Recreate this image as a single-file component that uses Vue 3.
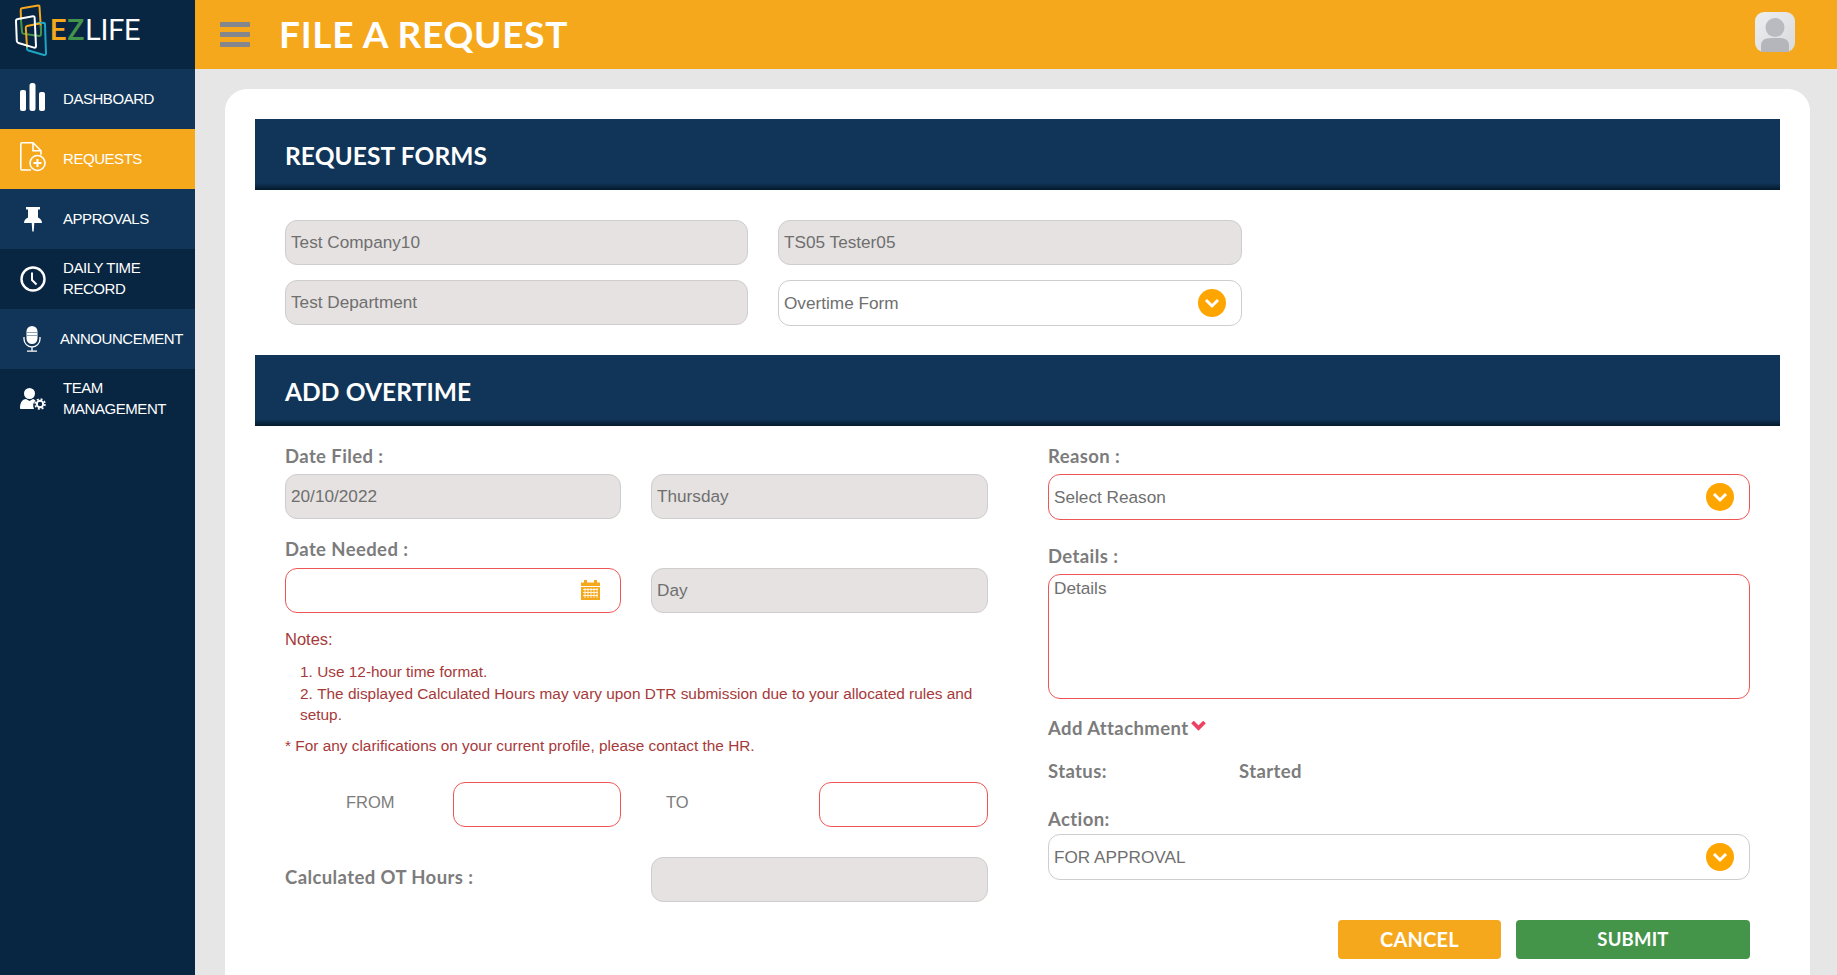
<script setup>
const menu = [
  { id: 'dash', lines: ['DASHBOARD'], tone: 'light' },
  { id: 'req', lines: ['REQUESTS'], tone: 'active' },
  { id: 'pin', lines: ['APPROVALS'], tone: 'light' },
  { id: 'clock', lines: ['DAILY TIME', 'RECORD'], tone: 'dark' },
  { id: 'mic', lines: ['ANNOUNCEMENT'], tone: 'light', tight: true },
  { id: 'team', lines: ['TEAM', 'MANAGEMENT'], tone: 'dark' }
]
</script>

<template>
  <div class="app">
    <aside class="sidebar">
      <div class="logo">
        <svg class="logo-mark" width="50" height="60" viewBox="0 0 50 60" fill="none" stroke-width="2" stroke-linecap="round">
          <path d="M11 20L10.700 10Q10.700 8.500 12 8.300L28 5.500Q29.500 5.300 29.500 7L31 30" stroke="#f6a81c" />
          <path d="M11 20L12 32Q12 33.500 13.500 33.700L29 36Q31 36 31 34L31 26" stroke="#43944a" />
          <path d="M17 46L17 49Q17 50 18.500 50.500L34 55Q36.200 55.300 36 53L35 24.500Q35 22.800 33.500 22.800L27 23.200" stroke="#1ba7c4" />
          <path d="M17 46.500L15.800 28Q15.700 26.300 17 26L29.500 23.500" stroke="#f6a81c" />
          <path d="M8 19L23 16.200Q24.500 16 24.600 17.500L26 46Q26 48 24 47.600L8.500 43Q7 42.600 6.800 41L6 21Q6 19.300 8 19Z" stroke="#fff" />
        </svg>
        <span class="logo-text"><span class="ez-e">E</span><span class="ez-z">Z</span>LIFE</span>
      </div>
      <nav>
        <a v-for="m in menu" :key="m.id" class="item" :class="[m.tone, m.id, { tight: m.tight }]">
          <span class="ico">
            <svg v-if="m.id === 'dash'" width="26" height="28" viewBox="0 0 26 28" fill="#fff">
              <rect x="0" y="7" width="6" height="21" rx="2" /><rect x="9.500" y="0" width="6" height="28" rx="2.500" /><rect x="19" y="9" width="6" height="19" rx="2" />
            </svg>
            <svg v-else-if="m.id === 'req'" width="26" height="30" viewBox="0 0 26 30" fill="none" stroke="#fff" stroke-width="1.600">
              <path d="M11 28H2a1.200 1.200 0 0 1-1.200-1.200V2A1.200 1.200 0 0 1 2 .8h11l8 8v4" /><path d="M13 .8v8h8" />
              <circle cx="17.500" cy="21" r="7.500" /><path d="M17.500 17v8M13.500 21h8" stroke-width="2" />
            </svg>
            <svg v-else-if="m.id === 'pin'" width="20" height="25" viewBox="0 0 20 25" fill="#fff">
              <path d="M3 0h14v2.500h-2v8c2.500 1 4 3 4 5.500H11.300l-.6 8.500h-1.400L8.700 16H1c0-2.500 1.500-4.500 4-5.500v-8H3z" />
            </svg>
            <svg v-else-if="m.id === 'clock'" width="26" height="26" viewBox="0 0 26 26" fill="none" stroke="#fff">
              <circle cx="13" cy="13" r="11.500" stroke-width="2.400" /><path d="M12 6.500V14l4.500 4.500" stroke-width="2" />
            </svg>
            <svg v-else-if="m.id === 'mic'" width="18" height="26" viewBox="0 0 18 26" fill="none">
              <rect x="3.500" y="0" width="11" height="18" rx="5.500" fill="#fff" /><path d="M3.500 6.500h11M3.500 9.500h11" stroke="#8da3b8" stroke-width="1.200" />
              <path d="M1 11v2a8 8 0 0 0 16 0v-2M9 21v4M4 25.200h10" stroke="#fff" stroke-width="1.300" />
            </svg>
            <svg v-else width="26" height="22" viewBox="0 0 26 22" fill="#fff">
              <circle cx="9.500" cy="5.500" r="5.500" /><path d="M0 20c0-6 3-9 6-9l3.500 2 3.500-2c1 .3 2 1 2.500 1.800-2.500 2-3 4.500-1.500 8.200H1c-.6 0-1-.4-1-1z" />
              <circle cx="20" cy="16" r="3.200" fill="none" stroke="#fff" stroke-width="2" />
              <circle cx="20" cy="16" r="5" fill="none" stroke="#fff" stroke-width="1.500" stroke-dasharray="2 1.930" />
            </svg>
          </span>
          <span class="label"><span v-for="l in m.lines" :key="l">{{ l }}</span></span>
        </a>
      </nav>
    </aside>

    <div class="main">
      <header class="top">
        <div class="burger"><i></i><i></i><i></i></div>
        <h1>FILE A REQUEST</h1>
        <div class="avatar">
          <svg width="40" height="40" viewBox="0 0 40 40">
            <defs>
              <linearGradient id="g" x1="0" y1="0" x2="1" y2="1"><stop offset="0" stop-color="#eceeef" /><stop offset="1" stop-color="#d8dadd" /></linearGradient>
            </defs>
            <rect width="40" height="40" rx="9" fill="url(#g)" />
            <circle cx="20" cy="15.500" r="9.500" fill="#b9bbc0" />
            <path d="M6 40v-6c0-8 6-8 14-8s14 0 14 8v6z" fill="#b4b6bb" />
          </svg>
        </div>
      </header>

      <main class="content">
        <section class="card">
          <div class="band">REQUEST FORMS</div>
          <div class="top-form">
            <div class="field ro">Test Company10</div>
            <div class="field ro">TS05 Tester05</div>
            <div class="field ro">Test Department</div>
            <div class="field sel">Overtime Form
              <svg class="chev" width="28" height="28" viewBox="0 0 28 28"><circle cx="14" cy="14" r="14" fill="#ffa500" /><path d="M8 11l6 6 6-6" fill="none" stroke="#fff" stroke-width="3" /></svg>
            </div>
          </div>

          <div class="band">ADD OVERTIME</div>
          <div class="columns">
            <div class="col">
              <div class="lab first">Date Filed :</div>
              <div class="pair">
                <div class="field ro">20/10/2022</div>
                <div class="field ro">Thursday</div>
              </div>
              <div class="lab second">Date Needed :</div>
              <div class="pair">
                <div class="field err cal">
                  <svg width="19" height="20" viewBox="0 0 19 20">
                    <path d="M0 2.500h3V0h3v2.500h7V0h3v2.500h3V6H0z" fill="#f6a81c" />
                    <path d="M0 7h19v13H0z" fill="#f6a81c" />
                    <path d="M2 9.500h15M2 12.500h15M2 15.500h15M4 8v10M7 8v10M10 8v10M13 8v10M16 8v10" stroke="#fff" stroke-width=".8" fill="none" />
                  </svg>
                </div>
                <div class="field ro">Day</div>
              </div>
              <div class="notes">
                <div class="notes-title">Notes:</div>
                <ol>
                  <li>Use 12-hour time format.</li>
                  <li>The displayed Calculated Hours may vary upon DTR submission due to your allocated rules and setup.</li>
                </ol>
                <div class="star">* For any clarifications on your current profile, please contact the HR.</div>
              </div>
              <div class="pair time">
                <div class="range"><span class="from">FROM</span><div class="field err"></div></div>
                <div class="range"><span class="to">TO</span><div class="field err"></div></div>
              </div>
              <div class="pair calc">
                <div class="lab">Calculated OT Hours :</div>
                <div class="field ro"></div>
              </div>
            </div>

            <div class="col">
              <div class="lab first">Reason :</div>
              <div class="field err sel">Select Reason
                <svg class="chev" width="28" height="28" viewBox="0 0 28 28"><circle cx="14" cy="14" r="14" fill="#ffa500" /><path d="M8 11l6 6 6-6" fill="none" stroke="#fff" stroke-width="3" /></svg>
              </div>
              <div class="lab details">Details :</div>
              <div class="field err area">Details</div>
              <div class="lab attach">Add Attachment
                <svg width="17" height="12" viewBox="0 0 17 12"><path d="M2.500 2l6 6 6-6" fill="none" stroke="#ee4060" stroke-width="3.800" /></svg>
              </div>
              <div class="lab status"><span>Status:</span><span>Started</span></div>
              <div class="lab action">Action:</div>
              <div class="field sel">FOR APPROVAL
                <svg class="chev" width="28" height="28" viewBox="0 0 28 28"><circle cx="14" cy="14" r="14" fill="#ffa500" /><path d="M8 11l6 6 6-6" fill="none" stroke="#fff" stroke-width="3" /></svg>
              </div>
              <div class="buttons">
                <button class="btn cancel">CANCEL</button>
                <button class="btn submit">SUBMIT</button>
              </div>
            </div>
          </div>
        </section>
      </main>
    </div>
  </div>
</template>

<style>
html, body { margin: 0; height: 100%; overflow: hidden; }
</style>

<style scoped>
.app { display: flex; height: 975px; overflow: hidden; font-family: "Liberation Sans", Arial, sans-serif; }
.sidebar { width: 195px; flex: none; background: #082542; }
.logo { height: 69px; display: flex; align-items: flex-start; padding-left: 10px; box-sizing: border-box; }
.logo-mark { flex: none; }
.logo-text { font: 400 29px/1 Roboto, sans-serif; color: #fff; margin: 16px 0 0 -10px; letter-spacing: -.3px; }
.ez-z { color: #43944a; margin-right: 1px; font-weight: 500; }
.ez-e { color: #f6a81c; margin-right: 1px; font-weight: 500; }
.item { height: 60px; display: flex; align-items: center; color: #fff; font: 400 15px/21px "Liberation Sans", Arial, sans-serif; letter-spacing: -.45px; }
.item.light { background: #103558; }
.item.dark { background: #082542; }
.item.active { background: #f6a81c; }
.ico { width: 63px; padding-left: 20px; box-sizing: border-box; flex: none; display: flex; }
.dash .ico, .req .ico { padding-bottom: 4px; }
.pin .ico { padding-left: 23px; }
.item.tight .ico { width: 60px; padding-left: 23px; }
.label { display: flex; flex-direction: column; padding-bottom: 2px; }
.label span { white-space: nowrap; }

.main { flex: 1; min-width: 0; display: flex; flex-direction: column; background: #e6e6e6; }
.top { height: 69px; flex: none; background: #f6a81c; display: flex; align-items: center; position: relative; }
.burger { width: 30px; margin-left: 25px; display: flex; flex-direction: column; gap: 5px; }
.burger i { height: 5px; border-radius: 1px; background: #83868c; }
.top h1 { margin: -3px 0 0 29px; font: 700 37px/1 Lato, sans-serif; color: #fff; letter-spacing: .7px; }
.avatar { position: absolute; left: 1560px; top: 12px; display: flex; }

.content { flex: 1; min-height: 0; padding: 20px 27px 0 30px; overflow: hidden; }
.card { background: #fff; border-radius: 22px 22px 0 0; padding: 30px 30px 40px; height: 886px; box-sizing: border-box; }
.band { height: 71px; background: linear-gradient(to bottom, #103558 0, #103558 64px, #04182a 71px); color: #fff; font: 700 24.500px/73px Lato, sans-serif; padding-left: 30px; letter-spacing: .1px; }
.top-form { display: grid; grid-template-columns: 463px 464px; column-gap: 30px; row-gap: 15px; padding: 30px 30px 29px; }

.field { height: 45px; box-sizing: border-box; border-radius: 12px; border: 1px solid #cfcdcd; background: #fff; color: #6f6f6f; font-size: 17.200px; line-height: 43px; padding-left: 5px; position: relative; }
.field.ro { background: #e5e2e1; }
.field.err { border-color: #ee5555; }
.sel { height: 46px; line-height: 45px; }
.chev { position: absolute; right: 15px; top: 8px; }
.cal svg { position: absolute; right: 20px; top: 11px; }

.columns { display: grid; grid-template-columns: 703px 702px; column-gap: 60px; padding: 0 30px; }
.lab { font: 700 18.500px/22px Lato, sans-serif; color: #7c7c7c; letter-spacing: .4px; }
.lab.first { padding-top: 19px; margin-bottom: 7px; }
.lab.second { margin-top: 19px; margin-bottom: 8px; }
.pair { display: grid; grid-template-columns: 336px 337px; column-gap: 30px; }

.notes { color: #a63a3a; font-size: 15.400px; margin-top: 16px; }
.notes-title { font-size: 16.500px; line-height: 20px; }
.notes ol { margin: 12px 0 0; padding: 0 0 0 15px; line-height: 21.500px; list-style-position: inside; }
.star { line-height: 20px; margin-top: 10px; }
.time { margin-top: 26px; }
.range { display: grid; align-items: center; }
.range:first-child { grid-template-columns: 168px 168px; }
.range:last-child { grid-template-columns: 168px 169px; }
.range span { font-size: 16.500px; color: #7c7c7c; padding-bottom: 3px; }
.from { padding-left: 61px; }
.to { padding-left: 15px; }
.calc { margin-top: 30px; align-items: center; }
.calc .lab { padding-bottom: 5px; }

.details { margin-top: 25px; margin-bottom: 7px; }
.area { height: 125px; line-height: 20px; padding-top: 3px; }
.attach { margin-top: 18px; display: flex; align-items: flex-start; gap: 2px; }
.attach svg { margin-top: 3px; }
.status { margin-top: 21px; display: grid; grid-template-columns: 191px 1fr; }
.action { margin-top: 26px; margin-bottom: 4px; }
.buttons { display: flex; justify-content: flex-end; gap: 15px; margin-top: 40px; }
.btn { height: 39px; border: 0; border-radius: 4px; color: #fff; font: 700 20px/39px Lato, sans-serif; padding: 0; letter-spacing: .2px; }
.cancel { width: 163px; background: #f6a81c; }
.submit { width: 234px; background: #44944a; font-size: 18.500px; }
</style>
